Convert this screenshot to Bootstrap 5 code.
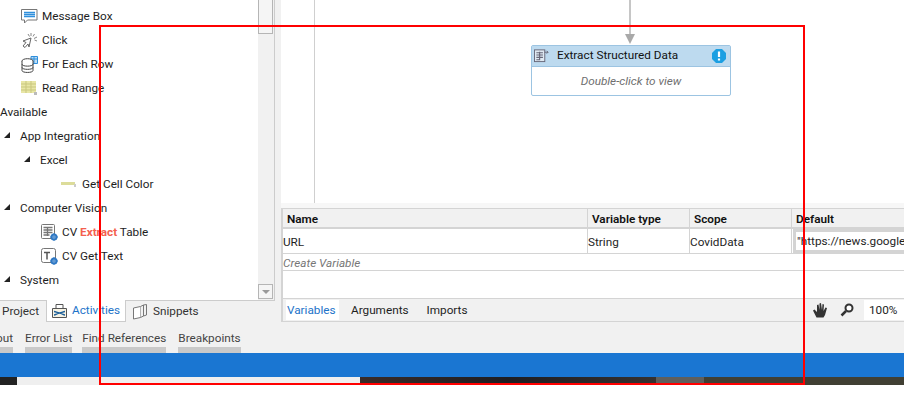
<!DOCTYPE html>
<html lang="en">

<head>
    <meta charset="UTF-8">
    <meta name="viewport" content="width=device-width, initial-scale=1">
    <title>Studio</title>
    <link href="https://cdn.jsdelivr.net/npm/bootstrap@5.3.3/dist/css/bootstrap.min.css" rel="stylesheet">
    <style>
        html, body {
            background: #fff;
            overflow: hidden;
        }

        body {
            position: relative;
            width: 904px;
            height: 410px;
            font-family: Roboto, "Liberation Sans", sans-serif;
            font-size: 11.75px;
            color: #1e1e1e;
        }

        .studio {
            height: 353px;
            background: #f1f1f1;
        }

        .left-pane {
            width: 281px;
            flex: none;
            overflow: hidden;
        }

        .tree-box {
            height: 301px;
            width: 275px;
            background: #fff;
            border-right: 1px solid #ccc;
            border-bottom: 1px solid #ccc;
        }

        .tree-list {
            width: 258px;
            padding-top: 5px;
            overflow: hidden;
        }

        .tree-row {
            height: 24px;
            white-space: nowrap;
        }

        .tree-row svg {
            flex: none;
            margin-top: -2px;
        }

        .lvl-1 { padding-left: 4px; }
        .lvl-2 { padding-left: 24px; }
        .act-1 { padding-left: 21px; }
        .act-2 { padding-left: 41px; }
        .act-3 { padding-left: 56px; }

        .act-3 svg {
            margin-right: 2px;
        }

        .expander {
            width: 0;
            height: 0;
            margin: -4px 10px 0 0;
            border-left: 6px solid transparent;
            border-bottom: 6px solid #222;
        }

        .hit {
            color: #f4604f;
            font-weight: 700;
        }

        .scroll-rail {
            width: 16px;
            background: #f1f1f1;
        }

        .scroll-thumb {
            width: 15px;
            height: 34px;
            background: #f5f5f5;
            border: 1px solid #b5b5b5;
            border-top: 0;
        }

        .scroll-btn {
            width: 15px;
            height: 15px;
            margin-bottom: 1px;
            background: #f5f5f5;
            border: 1px solid #b5b5b5;
        }

        .scroll-btn i {
            width: 0;
            height: 0;
            border-left: 4px solid transparent;
            border-right: 4px solid transparent;
            border-top: 4px solid #999;
        }

        .side-tabs {
            height: 21px;
            width: 275px;
        }

        .side-tab {
            height: 21px;
            color: #333;
        }

        .tab-project {
            width: 46px;
            padding: 1px 0 0 2px;
        }

        .side-tab.current {
            width: 80px;
            height: 22px;
            margin-top: -1px;
            padding: 1px 0 0 5px;
            background: #fff;
            color: #1d73c9;
            border: 1px solid #ccc;
            border-top: 0;
        }

        .tab-snippets {
            padding: 1px 0 0 7px;
        }

        .out-tabs {
            padding-top: 8px;
            height: 31px;
        }

        .out-tab {
            margin-right: 12px;
            height: 23px;
            color: #444;
            border-bottom: 6px solid #c9c9c9;
            line-height: 17px;
        }

        .out-tab.cut-off {
            margin-left: -4px;
        }

        .out-tab.tight {
            margin-right: 10px;
        }

        .right-pane {
            width: 623px;
            flex: none;
        }

        .canvas {
            height: 203px;
            background: #fff;
            position: relative;
        }

        .canvas-rule {
            width: 34px;
            height: 100%;
            border-right: 1px solid #cfcfcf;
        }

        .arrow-line {
            position: absolute;
            left: 348px;
            top: 0;
            width: 2px;
            height: 34px;
            background: #c6c6c6;
        }

        .arrow-head {
            position: absolute;
            left: 344px;
            top: 34px;
            width: 0;
            height: 0;
            border-left: 5px solid transparent;
            border-right: 5px solid transparent;
            border-top: 10px solid #a9a9a9;
        }

        .flow-node {
            position: absolute;
            left: 250px;
            top: 45px;
            width: 200px;
            height: 51px;
            border: 1px solid #9cc4e2;
            border-radius: 2px;
            background: #fff;
        }

        .flow-head {
            height: 21px;
            background: #bddaef;
            border-bottom: 1px solid #9cc4e2;
            padding: 0 4px 1px 2px;
            color: #111;
        }

        .flow-body {
            height: 28px;
            padding-top: 1px;
            color: #6f6f6f;
            font-style: italic;
        }

        .warn-mark {
            width: 14px;
            height: 14px;
            margin-left: auto;
        }

        .band-gap {
            height: 5px;
            background: #f7f7f7;
        }

        .var-panel {
            height: 114px;
            background: #fff;
            border-left: 2px solid #d4d4d4;
            border-bottom: 1px solid #d4d4d4;
            border-top: 1px solid #d4d4d4;
        }

        .var-grid {
            display: grid;
            grid-template-columns: 305px 102px 102px 1fr;
        }

        .var-head {
            height: 20px;
            background: #f1f1f1;
            border-bottom: 2px solid #d4d4d4;
            border-right: 1px solid #d4d4d4;
            padding-left: 4px;
            font-weight: 600;
            color: #111;
            line-height: 20px;
        }

        .var-cell {
            height: 25px;
            border-bottom: 1px solid #d4d4d4;
            border-right: 1px solid #d4d4d4;
            line-height: 26px;
            white-space: nowrap;
            overflow: hidden;
        }

        .var-input {
            height: 24px;
            margin-left: 1px;
            padding-left: 1px;
            border: 3px solid #d4d4d4;
            border-right: 0;
            line-height: 19px;
            white-space: nowrap;
            overflow: hidden;
        }

        .var-create {
            height: 17px;
            border-bottom: 1px solid #d4d4d4;
            color: #777;
            font-style: italic;
            line-height: 18px;
        }

        .var-tabs {
            height: 24px;
            padding-left: 3px;
            background: #f1f1f1;
            border-top: 1px solid #d4d4d4;
            margin-top: 27px;
        }

        .var-tab {
            height: 20px;
            padding: 0 5px 0 1px;
            margin-right: 12px;
            line-height: 21px;
        }

        .var-tab.current {
            width: 53px;
            background: #fff;
            color: #1d73c9;
            margin-right: 11px;
        }

        .tool-hand {
            margin-right: 12px;
        }

        .zoom-box {
            width: 40px;
            height: 20px;
            margin-left: 10px;
            padding-left: 5px;
            background: #fff;
            line-height: 21px;
        }

        .blue-band {
            height: 24px;
            background: #1a76d2;
        }

        .task-strip {
            height: 8px;
        }

        .task-strip > div {
            height: 100%;
        }

        .seg-a { width: 17px; background: #222; }
        .seg-b { width: 343px; background: #efefef; }
        .seg-c { width: 296px; background: linear-gradient(90deg, #3a2c28, #1e1e22 50%, #363230); }
        .seg-d { width: 48px; background: #5f5f5c; }
        .seg-e { width: 200px; background: #403f33; }

        .red-frame {
            position: absolute;
            left: 99px;
            top: 25px;
            width: 706px;
            height: 360px;
            border: 2px solid #f00;
            pointer-events: none;
        }
    </style>
</head>

<body>
    <div class="studio d-flex">
        <div class="left-pane d-flex flex-column">
            <div class="tree-box d-flex">
                <div class="tree-list flex-grow-1">
                    <div class="tree-row act-1 d-flex align-items-center gap-1">
                        <svg width="17" height="17" viewBox="0 0 17 17"><path d="M.5 1.500h15.500v10.500H6.500l-3 3v-3h-3z" fill="#fff" stroke="#777"/><path d="M3 4.500h11M3 6.500h11M3 8.500h11" stroke="#2f8fdc" stroke-width="1.300"/></svg>
                        <span>Message Box</span>
                    </div>
                    <div class="tree-row act-1 d-flex align-items-center gap-1">
                        <svg width="17" height="17" viewBox="0 0 17 17"><path d="M10 6L2 9l3 1.500L2 14l2 1.500 3-3.500 1 3z" fill="#fff" stroke="#666"/><path d="M10 1v3M13.500 2l-1.500 2.500M16 5l-3 1.500M16 9l-2.500-1M7 2l1.500 2.500" stroke="#888"/></svg>
                        <span>Click</span>
                    </div>
                    <div class="tree-row act-1 d-flex align-items-center gap-1">
                        <svg width="17" height="17" viewBox="0 0 17 17"><path d="M10 .5h6.500v7H10z" fill="#bcdcf4" stroke="#2f8fdc"/><path d="M10 3h6.500M13 .5v7" stroke="#2f8fdc"/><ellipse cx="6.500" cy="5" rx="5.500" ry="2.300" fill="#fff" stroke="#444"/><path d="M1 5v9.500c0 2.600 11 2.600 11 0V5M1 8.200c0 2.600 11 2.600 11 0M1 11.400c0 2.600 11 2.600 11 0" fill="#fff" stroke="#444"/></svg>
                        <span>For Each Row</span>
                    </div>
                    <div class="tree-row act-1 d-flex align-items-center gap-1">
                        <svg width="17" height="17" viewBox="0 0 17 17"><rect x="0" y="1" width="15" height="12" fill="#e8e6a6"/><path d="M0 4h15M0 7h15M0 10h15M5 1v12M10 1v12" stroke="#c9c77f"/><rect x="13" y="12" width="3" height="3" fill="#bbb"/></svg>
                        <span>Read Range</span>
                    </div>
                    <div class="tree-row d-flex align-items-center"><span>Available</span></div>
                    <div class="tree-row lvl-1 d-flex align-items-center"><i class="expander"></i><span>App Integration</span></div>
                    <div class="tree-row lvl-2 d-flex align-items-center"><i class="expander"></i><span>Excel</span></div>
                    <div class="tree-row act-3 d-flex align-items-center gap-1">
                        <svg width="20" height="17" viewBox="0 0 20 17"><rect x="5" y="6" width="14" height="3" fill="#dcdc9a"/><rect x="18" y="8" width="2" height="3" fill="#ccc"/></svg>
                        <span>Get Cell Color</span>
                    </div>
                    <div class="tree-row lvl-1 d-flex align-items-center"><i class="expander"></i><span>Computer Vision</span></div>
                    <div class="tree-row act-2 d-flex align-items-center gap-1">
                        <svg width="17" height="17" viewBox="0 0 17 17"><rect x=".5" y=".5" width="13" height="14" rx="1" fill="#fff" stroke="#777"/><path d="M2.500 3.500h9M2.500 6h9M2.500 8.500h9M2.500 11h6M6.500 3v9" stroke="#777" stroke-width="1.300"/><circle cx="13" cy="13" r="2.500" fill="#fff" stroke="#2f78c4" stroke-width="2"/><path d="M13 9v8M9 13h8" stroke="#2f78c4"/></svg>
                        <span>CV <span class="hit">Extract</span> Table</span>
                    </div>
                    <div class="tree-row act-2 d-flex align-items-center gap-1">
                        <svg width="17" height="17" viewBox="0 0 17 17"><rect x=".5" y=".5" width="14" height="14" rx="2" fill="#fff" stroke="#777"/><path d="M3 4.500h6M6 4.500v7" stroke="#555" stroke-width="1.500"/><circle cx="13" cy="13" r="2.500" fill="#fff" stroke="#2f78c4" stroke-width="2"/><path d="M13 9v8M9 13h8" stroke="#2f78c4"/></svg>
                        <span>CV Get Text</span>
                    </div>
                    <div class="tree-row lvl-1 d-flex align-items-center"><i class="expander"></i><span>System</span></div>
                </div>
                <div class="scroll-rail d-flex flex-column justify-content-between">
                    <div class="scroll-thumb"></div>
                    <div class="scroll-btn d-flex align-items-center justify-content-center"><i></i></div>
                </div>
            </div>
            <div class="side-tabs d-flex align-items-center">
                <div class="side-tab tab-project d-flex align-items-center">Project</div>
                <div class="side-tab current d-flex align-items-center gap-1">
                    <svg width="16" height="16" viewBox="0 0 16 16"><path d="M.5 5.500h14v9H.5z" fill="#f7f3e4" stroke="#555"/><path d="M4 5.500V1.500h7v4" fill="none" stroke="#555"/><path d="M2 8.500c2 0 3 1.500 5.500 1.500S11 8.500 13 8.500M2 12c2 0 3-2 5.500-2s3.500 2 5.500 2" fill="none" stroke="#1d5f99" stroke-width="1.300"/></svg>
                    <span>Activities</span>
                </div>
                <div class="side-tab tab-snippets d-flex align-items-center gap-1">
                    <svg width="16" height="16" viewBox="0 0 16 16"><path d="M.5 4l7-1.500v11L.5 15z" fill="#fff" stroke="#777"/><path d="M7.500 2.500l3-1.500v11l-3 1.500M10.500 1l3-.5V11l-3 1" fill="#f1f1f1" stroke="#777"/></svg>
                    <span>Snippets</span>
                </div>
            </div>
            <div class="out-tabs d-flex">
                <div class="out-tab cut-off">out</div>
                <div class="out-tab tight">Error List</div>
                <div class="out-tab">Find References</div>
                <div class="out-tab">Breakpoints</div>
            </div>
        </div>
        <div class="right-pane d-flex flex-column">
            <div class="canvas">
                <div class="canvas-rule"></div>
                <div class="arrow-line"></div>
                <div class="arrow-head"></div>
                <div class="flow-node">
                    <div class="flow-head d-flex align-items-center gap-2">
                        <svg width="15" height="15" viewBox="0 0 16 15"><rect x=".5" y="1.500" width="11" height="12.500" fill="#dfe9f2" stroke="#667"/><path d="M2.500 4.500h7M2.500 7h7M2.500 9.500h7M2.500 12h4M6 3.500v9" stroke="#667" stroke-width="1.200"/><path d="M11 4h4M13.500 2.500L15 4l-1.500 1.500" fill="none" stroke="#667"/></svg>
                        <span>Extract Structured Data</span>
                        <svg class="warn-mark" viewBox="0 0 14 14"><path d="M4 0h6l4 4v6l-4 4H4l-4-4V4z" fill="#1c9fe2"/><path d="M7 2.500v5.500M7 9.500v2" stroke="#fff" stroke-width="2.200"/></svg>
                    </div>
                    <div class="flow-body d-flex align-items-center justify-content-center">Double-click to view</div>
                </div>
            </div>
            <div class="band-gap"></div>
            <div class="var-panel d-flex flex-column">
                <div class="var-grid">
                    <div class="var-head">Name</div>
                    <div class="var-head">Variable type</div>
                    <div class="var-head">Scope</div>
                    <div class="var-head border-end-0">Default</div>
                    <div class="var-cell">URL</div>
                    <div class="var-cell">String</div>
                    <div class="var-cell">CovidData</div>
                    <div class="var-cell border-end-0"><div class="var-input">"https://news.google</div></div>
                </div>
                <div class="var-create">Create Variable</div>
                <div class="var-tabs d-flex align-items-center">
                    <div class="var-tab current">Variables</div>
                    <div class="var-tab">Arguments</div>
                    <div class="var-tab">Imports</div>
                    <div class="ms-auto d-flex align-items-center">
                        <svg class="tool-hand" width="16" height="16" viewBox="0 0 16 16"><path d="M4.500 15.500L1 8.500l1.500-1L5 10V3l1.500-.5L7.500 8V1.500L9 1l1 7 .5-6 1.500.5-.5 6.500 2-3.500 1.500.5-2 7-1.500 2.500z" fill="#333"/></svg>
                        <svg width="14" height="14" viewBox="0 0 14 14"><circle cx="9" cy="5" r="3.500" fill="#fff" stroke="#333" stroke-width="2"/><path d="M6 8l-4.500 4.500" stroke="#333" stroke-width="2.500"/></svg>
                        <div class="zoom-box">100%</div>
                    </div>
                </div>
            </div>
        </div>
    </div>
    <div class="blue-band"></div>
    <div class="task-strip d-flex">
        <div class="seg-a"></div>
        <div class="seg-b"></div>
        <div class="seg-c"></div>
        <div class="seg-d"></div>
        <div class="seg-e"></div>
    </div>
    <div class="red-frame"></div>
    <script src="https://cdn.jsdelivr.net/npm/bootstrap@5.3.3/dist/js/bootstrap.bundle.min.js"></script>
</body>

</html>
